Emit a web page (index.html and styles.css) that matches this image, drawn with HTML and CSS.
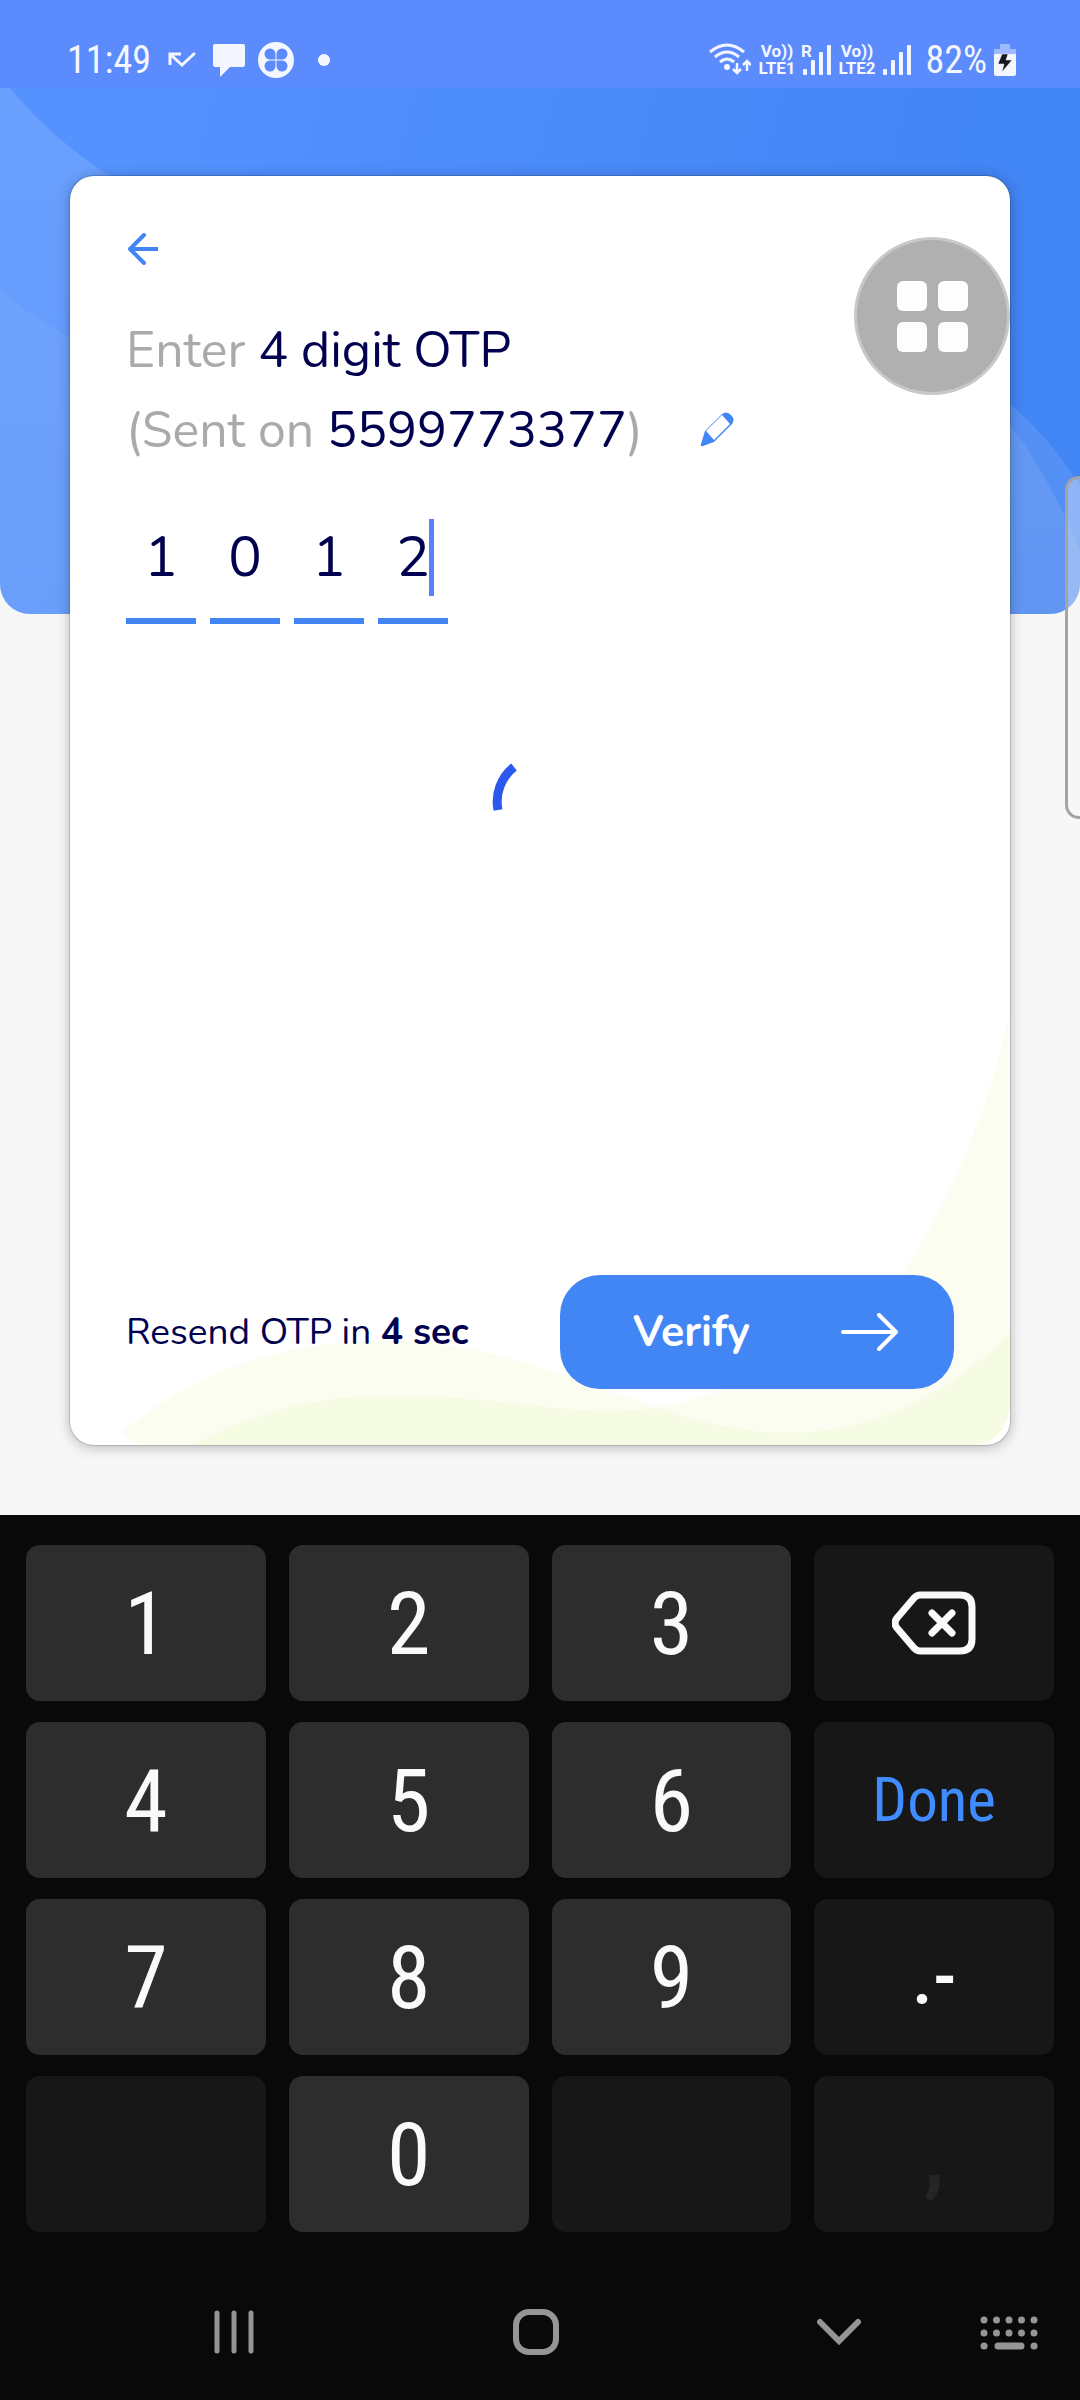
FILE: index.html
```html
<!DOCTYPE html>
<html lang="en">
<head>
<meta charset="utf-8">
<meta name="viewport" content="width=device-width, initial-scale=1">
<title>Verify OTP</title>
<link rel="stylesheet" href="styles.css">
</head>
<body>
<header class="status">
  <div class="status-left">
    <span class="clock">11:49</span>
    <svg class="ico-call" width="28" height="18" viewBox="0 0 28 18" fill="none" stroke="currentColor" stroke-width="3"><path d="M2 14V3H13M2 3L14 14L27 2"/></svg>
    <svg class="ico-chat" width="34" height="34" viewBox="0 0 34 34" fill="currentColor"><path d="M3 1H31Q33 1 33 3V22Q33 24 31 24H18L8 34V24H3Q1 24 1 22V3Q1 1 3 1Z"/></svg>
    <svg class="ico-clover" width="36" height="36" viewBox="0 0 36 36"><circle cx="18" cy="18" r="18" fill="currentColor"/><g fill="#5c8bfe"><path d="M17.500 17.500H12A5.500 5.500 0 1 1 17.500 12Z"/><path d="M18.500 17.500V12A5.500 5.500 0 1 1 24 17.500Z"/><path d="M17.500 18.500V24A5.500 5.500 0 1 1 12 18.500Z"/><path d="M18.500 18.500H24A5.500 5.500 0 1 1 18.500 24Z"/></g></svg>
    <span class="dot"></span>
  </div>
  <div class="status-right">
    <svg width="42" height="34" viewBox="0 0 42 34" fill="none" stroke="currentColor" stroke-width="3"><path d="M1 9Q18 -5 35 9M6 14Q18 4 30 14M11 19Q18 13 25 19"/><circle cx="18" cy="24" r="3" fill="currentColor" stroke="none"/><path d="M28 20V30M24 26L28 30L32 26M38 28V18M34 22L38 18L42 22" stroke-width="2.5"/></svg>
    <span class="volte"><span>Vo))</span><span>LTE1</span></span>
    <span class="signal"><span class="roam">R</span><svg width="28" height="30" viewBox="0 0 28 30" fill="currentColor"><rect y="24" width="4" height="6" rx="1"/><rect x="8" y="15" width="4" height="15" rx="1"/><rect x="16" y="7" width="4" height="23" rx="1"/><rect x="24" width="4" height="30" rx="1"/></svg></span>
    <span class="volte"><span>Vo))</span><span>LTE2</span></span>
    <span class="signal"><svg width="28" height="30" viewBox="0 0 28 30" fill="currentColor"><rect y="24" width="4" height="6" rx="1"/><rect x="8" y="15" width="4" height="15" rx="1"/><rect x="16" y="7" width="4" height="23" rx="1"/><rect x="24" width="4" height="30" rx="1"/></svg></span>
    <span class="percent">82%</span>
    <svg width="22" height="32" viewBox="0 0 22 32"><path d="M6 0H16V5H22V11H0V5H6Z" fill="#9db9ff"/><path d="M0 10H22V30Q22 32 20 32H2Q0 32 0 30Z" fill="currentColor"/><path d="M8 10H14L12 16H18L8 28L10 20H4Z" fill="#15171c" stroke="#f4f7ff" stroke-width="0.5"/></svg>
  </div>
</header>

<main class="screen">
  <svg class="hero" viewBox="0 0 1080 526" preserveAspectRatio="none" aria-hidden="true">
    <defs><linearGradient id="sky" gradientUnits="userSpaceOnUse" x1="100" y1="0" x2="930" y2="210"><stop offset="0" stop-color="#5492ff"/><stop offset="1" stop-color="#4285f5"/></linearGradient>
    <linearGradient id="glow" gradientUnits="userSpaceOnUse" x1="0" y1="0" x2="0" y2="526"><stop offset="0" stop-color="#fff" stop-opacity=".13"/><stop offset="1" stop-color="#dde4ee" stop-opacity=".1"/></linearGradient></defs>
    <rect width="1080" height="526" fill="url(#sky)"/>
    <path d="M0 0H10Q50 49 110 88C400 270 750 120 1010 316Q1050 350 1080 398V526H0Z" fill="url(#glow)"/>
    <path d="M0 202Q32 229 70 249H540V526H0Z" fill="#c8d4e8" fill-opacity=".09"/>
    <path d="M540 249C700 160 900 180 1010 336Q1050 390 1080 462V526H540Z" fill="#c8d4e8" fill-opacity=".13"/>
  </svg>

  <section class="card">
    <svg class="waves" viewBox="0 0 940 440" preserveAspectRatio="none" aria-hidden="true" fill="#e8f3b4" fill-opacity=".2">
      <path d="M52 427C130 362 222 336 315 336C475 336 590 428 715 428C810 428 880 385 940 329V403Q932 440 903 440H80Q62 440 52 427Z"/>
      <path d="M123 440C190 404 250 391 322 391C420 391 480 406 545 406C640 406 740 350 832 270C890 180 927 80 940 0V403Q932 440 903 440Z"/>
    </svg>
    <button class="back" type="button" aria-label="Back"><svg width="32" height="32" viewBox="0 0 32 32" fill="none" stroke="currentColor" stroke-width="4" stroke-linecap="round" stroke-linejoin="round"><path d="M31 16H4M18 2L4 16L18 30"/></svg></button>
    <h1 class="title">Enter <b>4 digit OTP</b><br>(Sent on <b>5599773377</b>)<button class="edit" type="button" aria-label="Edit number"><svg width="36" height="36" viewBox="0 0 36 36"><path d="M6 20L22 4Q27 -1 32 4Q37 9 32 14L15 31L4 35Q1 36 2 33Z" fill="#4285f5"/><path d="M7 20L23 4L31 13L15 29Z" fill="#fff"/></svg></button></h1>
    <div class="otp">
      <input aria-label="Digit 1" inputmode="numeric" maxlength="1" value="1">
      <input aria-label="Digit 2" inputmode="numeric" maxlength="1" value="0">
      <input aria-label="Digit 3" inputmode="numeric" maxlength="1" value="1">
      <span class="active"><input aria-label="Digit 4" inputmode="numeric" maxlength="1" value="2"><span class="caret"></span></span>
    </div>
    <svg class="spinner" width="100" height="100" viewBox="0 0 100 100" fill="none" stroke="#2d58ed" stroke-width="9"><path d="M8 60A44 44 0 0 1 24 17"/></svg>
    <div class="actions">
      <p class="resend">Resend OTP in <strong>4 sec</strong></p>
      <button class="verify" type="button">Verify<svg width="58" height="38" viewBox="0 0 58 38" fill="none" stroke="currentColor" stroke-width="4" stroke-linecap="round" stroke-linejoin="round"><path d="M3 19H56M39 2L56 19L39 36"/></svg></button>
    </div>
    <button class="assist" type="button" aria-label="Assistant menu"><i></i><i></i><i></i><i></i></button>
  </section>
  <span class="edge"></span>
</main>

<section class="keyboard" aria-label="Number pad">
  <div class="keys">
    <button type="button">1</button><button type="button">2</button><button type="button">3</button>
    <button type="button" class="dim" aria-label="Backspace"><svg width="84" height="64" viewBox="0 0 84 64" fill="none" stroke="currentColor" stroke-width="7" stroke-linecap="round" stroke-linejoin="round"><path d="M28 4H68Q80 4 80 16V48Q80 60 68 60H28Q25 60 22 57L5 37Q1 32 5 27L22 7Q25 4 28 4Z"/><path d="M40 22L60 42M60 22L40 42"/></svg></button>
    <button type="button">4</button><button type="button">5</button><button type="button">6</button>
    <button type="button" class="dim done">Done</button>
    <button type="button">7</button><button type="button">8</button><button type="button">9</button>
    <button type="button" class="dim punct">.-</button>
    <button type="button" class="dim" disabled aria-label="Blank"></button><button type="button">0</button><button type="button" class="dim" disabled aria-label="Blank"></button>
    <button type="button" class="dim comma" disabled>,</button>
  </div>
  <nav class="nav">
    <button type="button" aria-label="Recents"><svg width="40" height="44" viewBox="0 0 40 44" stroke="currentColor" stroke-width="5" stroke-linecap="round"><path d="M3 3V41M20 3V41M37 3V41"/></svg></button>
    <button type="button" aria-label="Home"><svg width="46" height="46" viewBox="0 0 46 46" fill="none" stroke="currentColor" stroke-width="6"><rect x="3" y="3" width="40" height="40" rx="13"/></svg></button>
    <button type="button" aria-label="Hide keyboard"><svg width="44" height="28" viewBox="0 0 44 28" fill="none" stroke="currentColor" stroke-width="6" stroke-linecap="round"><path d="M3 4L22 23L41 4"/></svg></button>
    <button type="button" class="switch" aria-label="Switch keyboard"><svg width="58" height="34" viewBox="0 0 58 34" fill="none" stroke="currentColor" stroke-width="7" stroke-linecap="round"><path d="M4 4H55M4 17H55" stroke-dasharray="0 12.5"/><path d="M4 30H4.1M54 30H54.1M18 30H41"/></svg></button>
  </nav>
</section>
</body>
</html>
```
FILE: styles.css
```css
* { box-sizing: border-box; }
body {
  margin: 0;
  min-height: 100vh;
  display: flex;
  flex-direction: column;
  background: #f7f7f7;
  font-family: Nunito, "Nunito Sans", Lato, sans-serif;
  overflow-x: hidden;
}
button { border: 0; padding: 0; margin: 0; background: none; font: inherit; color: inherit; display: flex; }
svg { display: block; flex: none; }

/* status bar */
.status {
  height: 88px;
  padding: 32px 64px 0 67px;
  display: flex;
  justify-content: space-between;
  background: #5c8bfe;
  color: #f4f7ff;
}
.status-left, .status-right { display: flex; align-items: center; height: 56px; }
.clock, .percent { font: 38px/56px "Roboto Condensed", Roboto, sans-serif; }
.clock { width: 101px; }
.ico-chat { margin-left: 16px; }
.ico-clover { margin-left: 12px; }
.dot { width: 12px; height: 12px; margin-left: 24px; border-radius: 50%; background: currentColor; }
.volte { display: flex; flex-direction: column; align-items: center; width: 42px; margin: 0 5px; font: 700 17px/17px Roboto, sans-serif; }
.signal { position: relative; }
.roam { position: absolute; left: -2px; top: -2px; font: 700 17px/17px Roboto, sans-serif; }
.percent { width: 76px; margin-right: 7px; text-align: right; }

/* blue backdrop and card */
.screen { position: relative; flex: 1; display: flex; padding: 88px 70px 70px; }
.hero { position: absolute; left: 0; top: 0; width: 100%; height: 526px; border-radius: 0 0 30px 30px; }
.card {
  position: relative;
  flex: 1;
  display: flex;
  flex-direction: column;
  align-items: flex-start;
  padding: 57px 56px 56px;
  border-radius: 24px;
  background: #fff;
  box-shadow: 0 0 0 1px rgba(0,0,0,.14), 0 2px 14px rgba(0,0,0,.28);
  color: #00004e;
}
.waves { position: absolute; left: 0; bottom: 0; width: 100%; height: 440px; border-radius: 0 0 24px 24px; }
.back { color: #4285f5; }
.title { margin: 46px 0 0; font-size: 50px; line-height: 80px; font-weight: 400; color: #aaa; }
.title b { font-weight: 400; color: #00004e; }
.edit { display: inline-flex; margin-left: 56px; }
.otp { display: flex; gap: 14px; margin-top: 19px; }
.otp input {
  display: block;
  width: 70px;
  height: 134px;
  padding: 6px 0 0;
  border: 0;
  border-bottom: 6px solid #4285f5;
  border-radius: 0;
  background: none;
  outline: 0;
  text-align: center;
  font: 56px Nunito, "Nunito Sans", Lato, sans-serif;
  color: #00004e;
}
.active { position: relative; }
.caret { position: absolute; left: 51px; top: 29px; width: 5px; height: 77px; background: #5c7ffb; }
.spinner { align-self: center; margin-top: 126px; }
.actions { position: relative; width: 100%; margin-top: auto; display: flex; align-items: center; justify-content: space-between; }
.resend { margin: 0; font-size: 37px; }
.verify {
  width: 394px;
  height: 114px;
  padding: 0 56px 0 73px;
  align-items: center;
  justify-content: space-between;
  border-radius: 40px;
  background: #4285f5;
  color: #fff;
  font-size: 43px;
  font-weight: 700;
}
.assist {
  position: absolute;
  right: 0;
  top: 61px;
  width: 156px;
  height: 158px;
  display: grid;
  grid-template-columns: 30px 30px;
  gap: 11px;
  place-content: center;
  border: 3px solid #c8c8c8;
  border-radius: 50%;
  background: #b0b0b0;
}
.assist i { height: 30px; border-radius: 6px; background: #fdfdfd; }
.edge {
  position: absolute;
  right: -4px;
  top: 388px;
  width: 19px;
  height: 343px;
  border: 3px solid #a4a4a4;
  border-right: 0;
  border-radius: 14px 0 0 14px;
  background: rgba(246,246,246,.36);
}

/* keyboard */
.keyboard { padding-top: 30px; background: #090909; color: #fafafa; font-family: "Roboto Condensed", Roboto, sans-serif; }
.keys { display: grid; grid-template-columns: repeat(4, 1fr); gap: 21px 23px; padding: 0 26px; }
.keys button { height: 156px; align-items: center; justify-content: center; border-radius: 14px; background: #2d2d2d; font-size: 88px; }
.keys .dim { background: #171717; }
.keys .done { color: #408cff; font-size: 61px; }
.keys .punct { font-size: 76px; font-weight: 500; }
.keys .comma { color: #252525; font-weight: 700; }
.nav { position: relative; display: flex; align-items: center; height: 136px; margin-top: 32px; padding: 0 90px 0 83px; color: #959595; }
.nav button { flex: 1; justify-content: center; }
.nav .switch { position: absolute; right: 42px; top: 52px; }
```
